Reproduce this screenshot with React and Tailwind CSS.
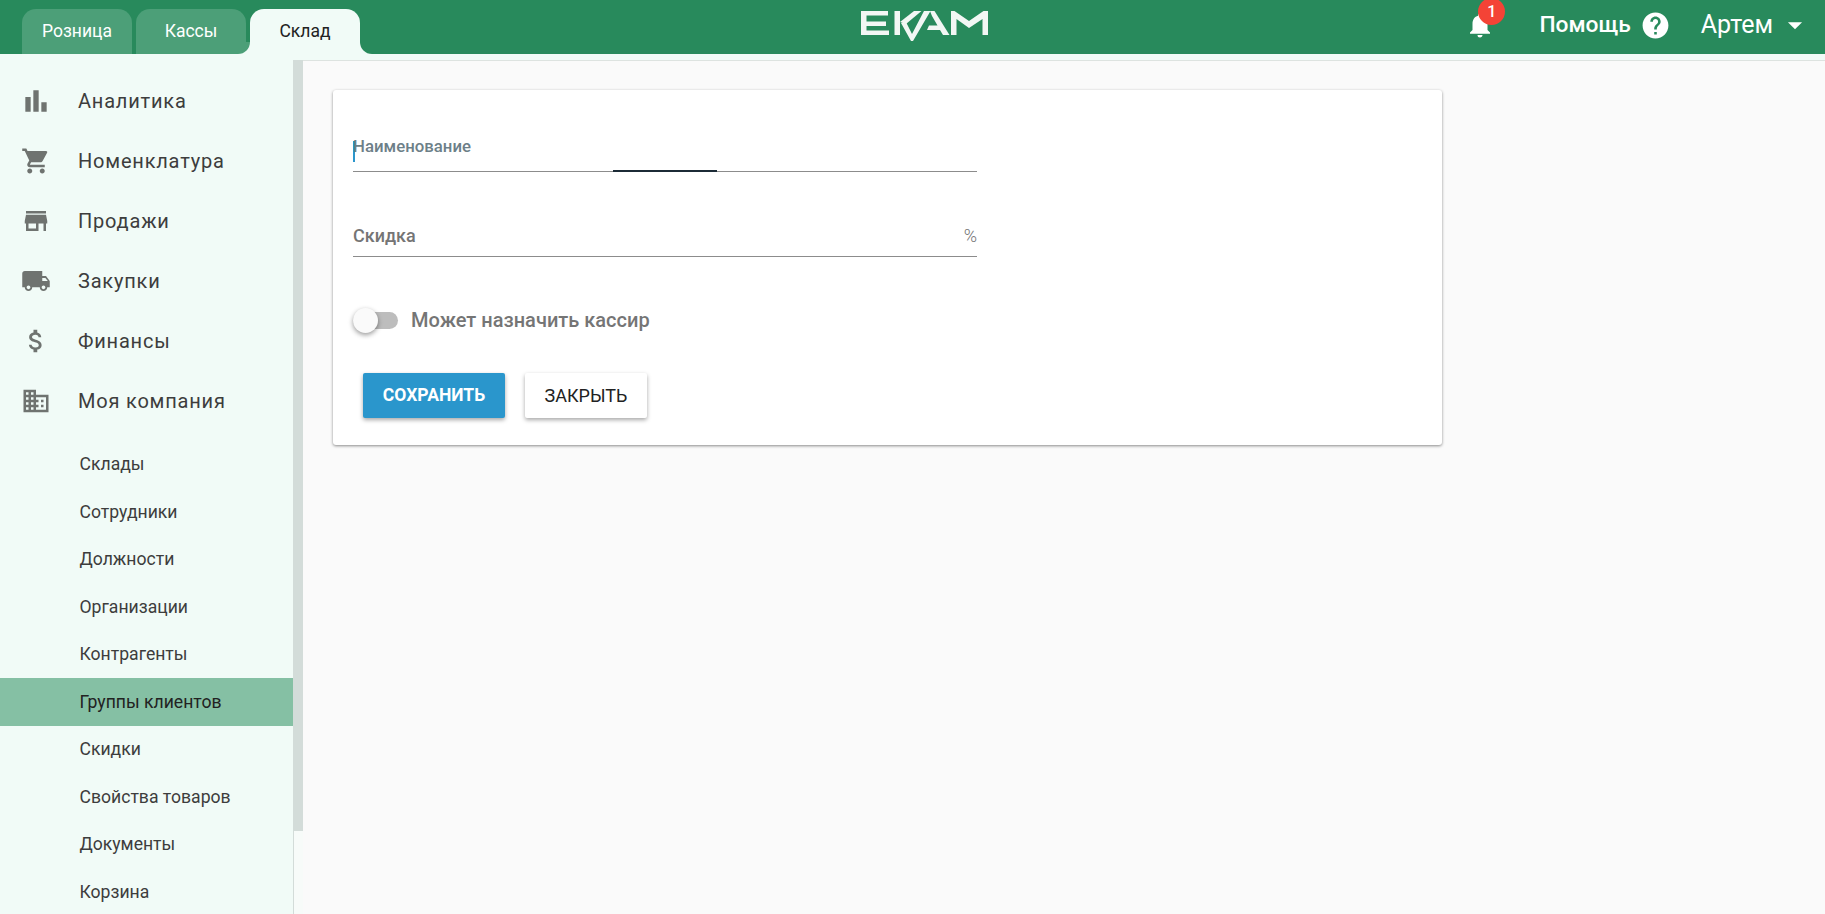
import React from "react";
import {
  MdBarChart,
  MdShoppingCart,
  MdStore,
  MdLocalShipping,
  MdAttachMoney,
  MdDomain,
  MdNotifications,
  MdHelp,
  MdArrowDropDown,
} from "react-icons/md";

const mainMenu = [
  { label: "Аналитика", icon: MdBarChart, size: 32 },
  { label: "Номенклатура", icon: MdShoppingCart, size: 30 },
  { label: "Продажи", icon: MdStore, size: 30 },
  { label: "Закупки", icon: MdLocalShipping, size: 30 },
  { label: "Финансы", icon: MdAttachMoney, size: 30 },
  { label: "Моя компания", icon: MdDomain, size: 30 },
];

const subMenu = [
  "Склады",
  "Сотрудники",
  "Должности",
  "Организации",
  "Контрагенты",
  "Группы клиентов",
  "Скидки",
  "Свойства товаров",
  "Документы",
  "Корзина",
];

const Logo = () => (
  <svg width="128" height="32" viewBox="0 0 128 32" fill="#f2f7f4">
    {/* E */}
    <path d="M0 1h27v4.5H5.5v6h19.500v4.500H5.500V20.500H28V25H0z" />
    {/* K upright and the check mark through it */}
    <path d="M33.500 1h5.500v24h-5.500z" />
    <path d="M39 12L53 1h7.500L45 14z" />
    <path d="M40 13l5-1 6 12L63 1h6.500L52 31h-2z" />
    {/* A */}
    <path d="M69 1h4.500l15 24h-6.500l-3-5H66l2-4.500h8.500L71 6z" />
    {/* M */}
    <path d="M90 25V1h3.500l14.500 10L122.500 1h4.500v24h-5.500V9l-13.500 9L95.500 9v16z" />
  </svg>
);

const Tab = ({ label, active }) => {
  if (active) {
    return (
      <div className="relative flex h-[45px] w-[110px] items-center justify-center rounded-t-[14px] bg-[#f1fbf7] text-[17.5px] text-[#222]">
        {label}
        <span className="absolute bottom-0 left-[-12px] h-[12px] w-[12px] bg-[#f1fbf7]">
          <span className="block h-full w-full rounded-br-[12px] bg-[#4c9f78]" />
        </span>
        <span className="absolute bottom-0 right-[-12px] h-[12px] w-[12px] bg-[#f1fbf7]">
          <span className="block h-full w-full rounded-bl-[12px] bg-[#288a5c]" />
        </span>
      </div>
    );
  }
  return (
    <div className="flex h-[45px] w-[110px] items-center justify-center rounded-t-[14px] bg-[#4c9f78] text-[17.5px] text-white">
      {label}
    </div>
  );
};

const Header = () => (
  <header className="relative flex h-[54px] shrink-0 items-end bg-[#288a5c] pl-[22px]">
    <div className="flex gap-[4px]">
      <Tab label="Розница" />
      <Tab label="Кассы" />
      <Tab label="Склад" active />
    </div>
    <div className="ml-[501px] self-start pt-[10px]">
      <Logo />
    </div>
    <div className="ml-auto flex h-full items-center self-start pb-[4px] text-white">
      <div className="relative mr-[44px] flex">
        <MdNotifications size={30} />
        <span className="absolute right-[-10px] top-[-12px] flex h-[27px] w-[27px] items-center justify-center rounded-full bg-[#f44336] text-[16px] font-medium">
          1
        </span>
      </div>
      <span className="text-[22.8px] font-medium">Помощь</span>
      <MdHelp size={31} className="ml-[9px]" />
      <span className="ml-[30px] text-[25px]">Артем</span>
      <MdArrowDropDown size={34} className="ml-[5px] mr-[13px]" />
    </div>
  </header>
);

const Sidebar = () => (
  <aside className="flex w-[303px] shrink-0 overflow-hidden">
    <nav className="w-[293px] shrink-0 bg-[#f1fbf7] pt-[11px]">
      {mainMenu.map((item) => (
        <div key={item.label} className="flex h-[60px] items-center text-[20px] tracking-[0.8px] text-[#3d3d3d]">
          <span className="flex w-[78px] justify-center pr-[6px] text-[#6f7370]">
            <item.icon size={item.size} />
          </span>
          {item.label}
        </div>
      ))}
      <div className="pt-[9.5px]">
        {subMenu.map((label) => (
          <div
            key={label}
            className={
              label === "Группы клиентов"
                ? "flex h-[47.5px] items-center bg-[#85c0a4] pl-[79.5px] text-[17.6px] text-[#222]"
                : "flex h-[47.5px] items-center pl-[79.5px] text-[17.6px] text-[#3d3d3d]"
            }
          >
            {label}
          </div>
        ))}
      </div>
    </nav>
    {/* scrollbar */}
    <div className="flex w-[10px] flex-col border-l border-[#d3dcd9] bg-[#f7fbf9]">
      <div className="h-[771px] w-full bg-[#d3dcd9]" />
    </div>
  </aside>
);

const FormCard = () => (
  <div className="ml-[30px] mt-[29px] h-[355px] w-[1109px] rounded-[3px] bg-white px-[20px] shadow-[0_1px_3px_rgba(0,0,0,0.45)]">
    {/* name */}
    <div className="relative flex h-[82px] items-end">
      <span className="absolute bottom-[10px] left-0 h-[21px] w-[2px] bg-[#2b96cc]" />
      <span className="absolute bottom-[13px] left-0 text-[16.8px] font-medium text-[#6d7f88]">Наименование</span>
      <div className="flex w-[624px]">
        <div className="h-[1px] w-[260px] self-end bg-[#8c8c8c]" />
        <div className="h-[2px] w-[104px] bg-[#1c2b36]" />
        <div className="h-[1px] w-[260px] self-end bg-[#8c8c8c]" />
      </div>
    </div>
    {/* discount */}
    <div className="mt-[53px] flex w-[624px] items-center justify-between border-b border-[#8c8c8c] pb-[9px] text-[18px] leading-[22px] text-[#757575]">
      <span className="font-medium">Скидка</span>
      <span className="font-light">%</span>
    </div>
    {/* switch */}
    <div className="mt-[51px] flex items-center">
      <div className="relative h-[17px] w-[45px] rounded-full bg-[#bdbdbd]">
        <span className="absolute left-0 top-[-4px] h-[25px] w-[25px] rounded-full bg-[#fafafa] shadow-[0_2px_5px_rgba(0,0,0,0.4)]" />
      </div>
      <span className="ml-[13px] text-[20px] font-medium leading-[24px] text-[#757575]">Может назначить кассир</span>
    </div>
    {/* buttons */}
    <div className="ml-[10px] mt-[41px] flex gap-[20px]">
      <button className="h-[45px] w-[142px] rounded-[2px] bg-[#2a96cc] text-[17.5px] font-bold text-white shadow-[0_2px_4px_rgba(0,0,0,0.35)]">СОХРАНИТЬ</button>
      <button className="h-[45px] w-[122px] rounded-[2px] bg-white text-[18px] text-[#222] shadow-[0_2px_4px_rgba(0,0,0,0.35)]">ЗАКРЫТЬ</button>
    </div>
  </div>
);

export default function App() {
  return (
    <div className="flex h-[914px] flex-col overflow-hidden bg-[#fafafa] font-['Roboto',sans-serif]">
      <Header />
      <div className="flex min-h-0 flex-1 flex-col">
        <div className="h-[6px] shrink-0 bg-[#f1fbf7]" />
        <div className="flex min-h-0 flex-1">
          <Sidebar />
          <main className="min-w-0 flex-1 border-t border-[#dde3e0]">
            <FormCard />
          </main>
        </div>
      </div>
    </div>
  );
}
